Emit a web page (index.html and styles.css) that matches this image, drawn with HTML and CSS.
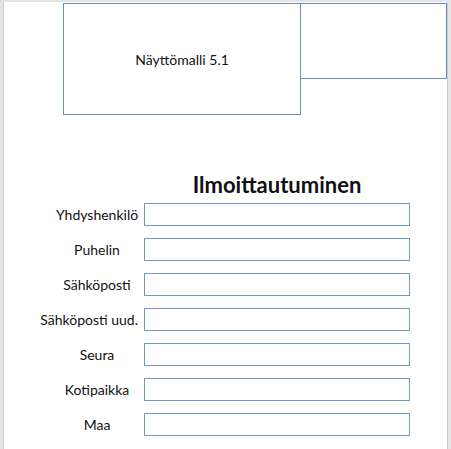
FILE: index.html
```html
<!DOCTYPE html>
<html lang="fi">
<head>
<meta charset="utf-8">
<title>Näyttömalli 5.1</title>
<link rel="stylesheet" href="styles.css">
</head>
<body>
<div class="page">
  <div class="top">
    <div class="box box-main">Näyttömalli 5.1</div>
    <div class="box box-side"></div>
  </div>
  <form class="form">
    <h1 class="title">Ilmoittautuminen</h1>
    <label class="label">Yhdyshenkilö</label><div class="field"></div>
    <label class="label">Puhelin</label><div class="field"></div>
    <label class="label">Sähköposti</label><div class="field"></div>
    <label class="label label-wide">Sähköposti uud.</label><div class="field"></div>
    <label class="label">Seura</label><div class="field"></div>
    <label class="label">Kotipaikka</label><div class="field"></div>
    <label class="label">Maa</label><div class="field"></div>
  </form>
</div>
</body>
</html>
```

FILE: styles.css
```css
html, body {
  margin: 0;
  height: 100%;
}
body {
  background: #e4e4e4;
  font-family: Lato, "Noto Sans", sans-serif;
  color: #111;
  overflow: hidden;
}
.page {
  box-sizing: border-box;
  margin: 2px 3px 0 3px;
  height: calc(100% - 2px);
  background: #fff;
  border-left: 1px solid #cdcdcd;
  border-right: 1px solid #cdcdcd;
  padding: 1px 0 0 59px;
}
.top {
  display: flex;
  align-items: flex-start;
}
.box {
  box-sizing: border-box;
  border: 1px solid #6b8fba;
}
.box-main {
  width: 240px;
  height: 112px;
  display: flex;
  align-items: center;
  justify-content: center;
  font-size: 14px;
}
.box-side {
  width: 148px;
  height: 76px;
  margin-left: -1px;
}
.form {
  display: grid;
  grid-template-columns: 82px 266px;
  column-gap: 6px;
  row-gap: 12px;
  margin: 0 0 0 -7px;
  padding-top: 58px;
  align-items: center;
}
.title {
  grid-column: 2;
  margin: 0 0 -6px 0;
  font-size: 22px;
  font-weight: 700;
  line-height: 24px;
  text-align: center;
}
.label {
  grid-column: 1;
  display: flex;
  justify-content: center;
  font-size: 14px;
  white-space: nowrap;
}
.label-wide {
  justify-content: flex-end;
}
.field {
  grid-column: 2;
  box-sizing: border-box;
  height: 23px;
  border: 1px solid #7297c3;
  background: #fff;
}
```
